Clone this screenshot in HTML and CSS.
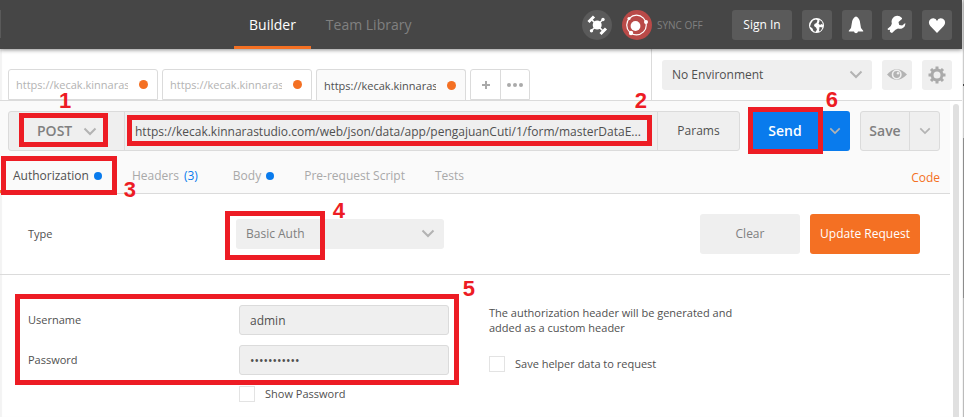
FILE: index.html
```html
<!DOCTYPE html>
<html lang="en">
<head>
<meta charset="utf-8">
<title>Postman</title>
<link rel="stylesheet" href="styles.css">
</head>
<body>
<svg class="defs" aria-hidden="true">
  <symbol id="chevron" viewBox="0 0 14 9"><path d="M1.500 1.500 7 7l5.500-5.500" fill="none" stroke="currentColor" stroke-width="2"/></symbol>
</svg>
<div class="window">
  <header class="topbar">
    <nav class="topnav">
      <a class="topnav-link active" href="#builder">Builder</a>
      <a class="topnav-link" href="#library">Team Library</a>
    </nav>
    <div class="tools">
      <button class="round" aria-label="Interceptor">
        <svg viewBox="0 0 30 30" width="30" height="30">
          <g stroke="#fff" stroke-width="1.600" fill="none"><path d="M9 9l12 12M21 9.500 9 21"/><path d="M6.500 12 12 6.500M18.500 24l5.500-5.500" stroke-width="3"/></g>
          <g fill="#fff"><circle cx="15.200" cy="15" r="4.500"/><circle cx="21" cy="9.500" r="1.700"/><circle cx="9.500" cy="20.700" r="1.700"/></g>
        </svg>
      </button>
      <button class="round sync" aria-label="Sync">
        <svg viewBox="0 0 30 30" width="30" height="30">
          <circle cx="14.500" cy="15" r="9.800" fill="none" stroke="#fff" stroke-width="1.200"/>
          <g fill="#fff"><circle cx="13.500" cy="16" r="4.900"/><circle cx="24" cy="12" r="2"/><circle cx="9" cy="23" r="2.200"/><circle cx="7" cy="8.500" r="1.600"/></g>
        </svg>
      </button>
      <span class="sync-label">SYNC OFF</span>
      <button class="tool signin">Sign In</button>
      <button class="tool" aria-label="Browse">
        <svg viewBox="0 0 30 30" width="30" height="30"><circle cx="14.500" cy="15.500" r="6.700" fill="#fff" stroke="#fff" stroke-width="1.600"/><path d="M9 13.500 11 10.500 14 9.500l1.500 1-1 2.500-2 1-.5 2 2 1.500 1 2-1.500 2.500-2-1-1-2.500-2.500-2zM17.500 9.800l2.500 2 1 3-1.500-.8-1.500 1-1.500-1.500.8-1.500zM17.500 17l3 .5-1.500 3-2 1z" fill="#5a5a5a"/></svg>
      </button>
      <button class="tool" aria-label="Notifications">
        <svg viewBox="0 0 30 30" width="30" height="30"><path d="M14 6.500q2.500.5 3.800 4.500l1.200 7 2.200 2.800v.7h-5.200q-.3 1.700-2 1.700T12 21.500H6.800v-.7L9 18l1.200-7Q11.500 7 14 6.500z" fill="#fff"/></svg>
      </button>
      <button class="tool" aria-label="Settings">
        <svg viewBox="0 0 30 30" width="30" height="30"><path d="M20 9 16.500 12l.7 3 3 .6 3.100-2.600q.3 4-3.300 5.500-2 .7-4-.1l-2.500 1.300-3.500 3.300-1.200-.5-1-1 .3-1.800-1.800.2-.9-1 3.400-2.900 1-2.300q-1.200-4.500 2.700-7.200 4-2 7.500 1.500z" fill="#fff"/></svg>
      </button>
      <button class="tool" aria-label="Favourites">
        <svg viewBox="0 0 30 30" width="30" height="30"><path d="M15 23 8.300 16Q6 13 7.500 10.200 9 8 11.500 8.200 14 8.500 15 11q1-2.500 3.500-2.800 2.500-.2 4 2Q24 13 21.700 16z" fill="#fff"/></svg>
      </button>
    </div>
  </header>

  <div class="strip">
    <div class="tabs">
      <button class="tab"><span class="tab-name">https://kecak.kinnarastudio.com</span><i class="dot unsaved"></i></button>
      <button class="tab"><span class="tab-name">https://kecak.kinnarastudio.com</span><i class="dot unsaved"></i></button>
      <button class="tab current"><span class="tab-name">https://kecak.kinnarastudio.com</span><i class="dot unsaved"></i></button>
      <div class="tab-actions">
        <button aria-label="New tab"><svg viewBox="0 0 10 10" width="10" height="10"><path d="M5 1v8M1 5h8" stroke="#aaa" stroke-width="2"/></svg></button>
        <button aria-label="More"><svg viewBox="0 0 18 6" width="18" height="6" fill="#aaa"><circle cx="3" cy="3" r="2"/><circle cx="9" cy="3" r="2"/><circle cx="15" cy="3" r="2"/></svg></button>
      </div>
    </div>
    <div class="environment">
      <div class="select env-select">
        <select aria-label="Environment"><option>No Environment</option></select>
        <svg class="chevron"><use href="#chevron"/></svg>
      </div>
      <button class="env-button" aria-label="Quick look">
        <svg viewBox="0 0 30 30" width="30" height="30"><path d="M5 14.500Q14.500 4 25 14.500 14.500 25 5 14.500z" fill="#b3b3b3"/><circle cx="14.700" cy="14.500" r="4.200" fill="none" stroke="#efefef" stroke-width="1.600"/><circle cx="16" cy="13.300" r="1.200" fill="#efefef"/></svg>
      </button>
      <button class="env-button" aria-label="Manage environments">
        <svg viewBox="0 0 30 30" width="30" height="30" fill="none" stroke="#aaa"><circle cx="15" cy="15" r="5" stroke-width="3"/><path d="M15 6.500v3M15 20.500v3M6.500 15h3M20.500 15h3M9 9l2.100 2.100M18.900 18.900 21 21M9 21l2.100-2.100M18.900 11.100 21 9" stroke-width="3"/></svg>
      </button>
    </div>
  </div>

  <div class="workspace">
    <main class="content">
      <section class="request">
        <div class="request-bar">
          <div class="request-line">
            <div class="method">
              <select aria-label="Method"><option>POST</option></select>
              <svg class="chevron"><use href="#chevron"/></svg>
              <span class="mark mark-method"><b>1</b></span>
            </div>
            <div class="url">
              <input type="text" aria-label="Request URL" value="https://kecak.kinnarastudio.com/web/json/data/app/pengajuanCuti/1/form/masterDataE...">
              <span class="mark mark-url"><b>2</b></span>
            </div>
            <button class="params">Params</button>
          </div>
          <div class="split send">
            <button class="split-main">Send</button>
            <button class="split-more" aria-label="Send options"><svg class="chevron"><use href="#chevron"/></svg></button>
            <span class="mark mark-send"><b>6</b></span>
          </div>
          <div class="split save">
            <button class="split-main">Save</button>
            <button class="split-more" aria-label="Save options"><svg class="chevron"><use href="#chevron"/></svg></button>
          </div>
        </div>
        <nav class="sections">
          <a class="section-link active" href="#auth">Authorization<i class="dot"></i><span class="mark mark-auth"><b>3</b></span></a>
          <a class="section-link" href="#headers">Headers<span class="count">(3)</span></a>
          <a class="section-link" href="#body">Body<i class="dot"></i></a>
          <a class="section-link" href="#script">Pre-request Script</a>
          <a class="section-link" href="#tests">Tests</a>
          <a class="code-link" href="#code">Code</a>
        </nav>
      </section>

      <section class="auth-type">
        <label class="type-label" for="type">Type</label>
        <div class="select type-select">
          <select id="type"><option>Basic Auth</option></select>
          <svg class="chevron"><use href="#chevron"/></svg>
          <span class="mark mark-type"><b>4</b></span>
        </div>
        <div class="actions">
          <button class="clear">Clear</button>
          <button class="update">Update Request</button>
        </div>
      </section>

      <form class="auth-form">
        <div class="fields">
          <div class="credentials">
            <label for="user">Username</label>
            <input id="user" type="text" value="admin">
            <label for="pass">Password</label>
            <input id="pass" type="password" value="adminkecak1">
            <span class="mark mark-credentials"><b>5</b></span>
          </div>
          <label class="check show-password"><input type="checkbox">Show Password</label>
        </div>
        <div class="helper">
          <p>The authorization header will be generated and added as a custom header</p>
          <label class="check"><input type="checkbox">Save helper data to request</label>
        </div>
      </form>
    </main>
    <div class="scroll"><div class="thumb"></div></div>
  </div>
</div>
<div class="window-edge"></div>
</body>
</html>
```

FILE: styles.css
```css
* { box-sizing: border-box; }

body {
  margin: 0;
  display: flex;
  min-height: 100vh;
  overflow: hidden;
  background: #fff;
  color: #505050;
  font: 12px/18px "Open Sans", "Noto Sans", sans-serif;
}

button, input, select {
  margin: 0;
  padding: 0;
  border: 0;
  border-radius: 0;
  background: none;
  color: inherit;
  font: inherit;
}

select { appearance: none; width: 100%; height: 100%; }
a { color: inherit; text-decoration: none; }
svg { display: block; }
.defs { position: absolute; width: 0; height: 0; }

.window {
  flex: 1;
  min-width: 0;
  display: flex;
  flex-direction: column;
  box-shadow: inset 2px 0 1px #f3f3f3;
}

.window-edge {
  width: 2px;
  border-left: 1px solid #f4f4f4;
  background: linear-gradient(#ccc 84px, #444 84px, #444 86px, #ccc 86px, #ccc 138px, #8c8c8c 138px, #8c8c8c 298px, #bbb 298px);
}

.dot {
  width: 8px;
  height: 8px;
  border-radius: 50%;
  background: #097bed;
}

.chevron { width: 14px; height: 9px; color: #b3b3b3; }

/* Top bar */
.topbar {
  position: relative;
  display: flex;
  justify-content: space-between;
  height: 49px;
  padding: 0 10px 0 234px;
  background: #464646;
  box-shadow: 0 1px 4px rgba(0, 0, 0, .45);
}

/* Edge of the button that is scrolled out on the left */
.topbar::before {
  content: "";
  position: absolute;
  left: 0;
  top: 10px;
  width: 1px;
  height: 28px;
  background: #5a5a5a;
}

.topnav { display: flex; }

.topnav-link {
  padding: 15px 15px 12px;
  color: #808080;
  font-size: 14px;
  line-height: 19px;
}

.topnav-link.active { border-bottom: 3px solid #f47023; color: #fff; }

.tools { display: flex; align-items: center; gap: 10px; }

.round, .tool {
  width: 30px;
  height: 30px;
  border-radius: 3px;
  background: #5a5a5a;
  color: #fff;
}

.round { border-radius: 50%; }
.round.sync { background: #b94a48; }
.sync-label { width: 65px; margin-left: -5px; color: #808080; font-size: 10px; }
.signin { width: 60px; }

/* Request tabs and environment */
.strip {
  display: flex;
  justify-content: space-between;
  height: 52px;
  border-bottom: 1px solid #dbdbdb;
}

.tabs { display: flex; align-items: flex-end; gap: 4px; padding-left: 8px; }

.tab {
  display: flex;
  align-items: center;
  justify-content: space-between;
  width: 150px;
  height: 31px;
  padding: 0 9px 0 7px;
  border: 1px solid #dbdbdb;
  border-radius: 3px 3px 0 0;
  background: #fff;
  color: #b3b3b3;
}

.tab.current { border-bottom: 0; background: #fafafa; color: #505050; }
.tab-name { width: 112px; overflow: hidden; white-space: nowrap; font-size: 11px; line-height: 15px; text-align: left; }
.tab .unsaved { width: 9px; height: 9px; background: #f47023; }

.tab-actions {
  display: flex;
  height: 31px;
  border: 1px solid #dbdbdb;
  border-radius: 3px 3px 0 0;
}

.tab-actions button { display: grid; place-items: center; width: 29px; }
.tab-actions button + button { border-left: 1px solid #dbdbdb; }

.environment {
  display: flex;
  align-items: center;
  gap: 10px;
  padding: 0 10px;
  border-left: 1px solid #dbdbdb;
}

.select { position: relative; height: 30px; border-radius: 3px; background: #efefef; }
.select select { padding-left: 10px; }
.select .chevron { position: absolute; right: 9px; top: 10px; pointer-events: none; }
.env-select { width: 210px; }
.env-button { width: 30px; height: 30px; border-radius: 3px; background: #efefef; }

/* Workspace */
.workspace { flex: 1; display: flex; }
.content { flex: 1; min-width: 0; }
.scroll { display: flex; width: 12px; padding: 3px 3px 0; }
.thumb { flex: 1; border-radius: 3px 3px 0 0; background: #e0e0e0; }

.request { border-bottom: 1px solid #dbdbdb; background: #fafafa; }
.request-bar { display: flex; gap: 10px; padding: 10px 10px 0 8px; }

.request-line {
  flex: 1;
  display: flex;
  height: 40px;
  border: 1px solid #dbdbdb;
  border-radius: 3px;
  background: #efefef;
}

.method { position: relative; width: 116px; border-right: 1px solid #dbdbdb; color: #808080; font-size: 14px; font-weight: 600; }
.method select { padding-left: 28px; }
.method .chevron { position: absolute; right: 27px; top: 15px; pointer-events: none; }
.url { position: relative; flex: 1; min-width: 0; }
.url input { width: 100%; height: 100%; padding: 0 10px; }
.params { width: 82px; border-left: 1px solid #dbdbdb; }

.split { position: relative; display: flex; height: 40px; border-radius: 3px; font-size: 14px; font-weight: 600; }
.split-more { display: grid; place-items: center; width: 30px; }
.split .chevron { width: 12px; height: 8px; }
.send { width: 100px; background: #097bed; color: #fff; }
.send .split-main { flex: 1; }
.save { width: 80px; border: 1px solid #dbdbdb; background: #efefef; color: #808080; }
.save .split-main { flex: 1; }
.save .split-more { border-left: 1px solid #dbdbdb; }

.sections { display: flex; color: #a9a9a9; height: 42px; }

.section-link {
  position: relative;
  display: flex;
  align-items: center;
  gap: 5px;
  padding: 10px 15px 0;
  border-bottom: 3px solid transparent;
}

.section-link.active { padding-left: 13px; border-color: #f47023; color: #505050; }
.count { padding-right: 5px; color: #097bed; }
.code-link { margin-left: auto; padding: 18px 10px 0 0; color: #f47023; }

/* Authorization */
.auth-type {
  display: flex;
  align-items: center;
  padding: 20px 30px 20px 28px;
  border-bottom: 1px solid #dbdbdb;
}

.type-label, .credentials label, .check { font-size: 11px; }
.type-label { width: 208px; }
.type-select { width: 208px; color: #808080; }
.actions { display: flex; gap: 10px; margin-left: auto; }
.actions button { width: 100px; height: 40px; border-radius: 3px; }
.actions .clear { background: #efefef; color: #808080; }
.actions .update { width: 110px; background: #f47023; color: #fff; }

.auth-form { display: flex; gap: 40px; padding: 30px 28px 0; }

.credentials {
  position: relative;
  display: grid;
  grid-template-columns: 211px 210px;
  align-items: center;
  row-gap: 10px;
}

.credentials input {
  height: 30px;
  padding: 0 10px;
  border: 1px solid #dbdbdb;
  border-radius: 3px;
  background: #efefef;
}

.check { display: flex; align-items: center; gap: 10px; }
.check input { appearance: none; width: 16px; height: 16px; border: 1px solid #e3e3e3; background: #fff; }
.show-password { margin: 10px 0 0 211px; }
.helper p { width: 250px; margin: 0 0 20px; font-size: 11px; line-height: 15px; }

/* Numbered callouts */
.mark { position: absolute; z-index: 1; border: 5px solid #ed1c24; pointer-events: none; }
.mark b { position: absolute; color: #ed1c24; font: bold 22px/16px "Liberation Sans", sans-serif; }
.mark-method { inset: 1px 16px 3px 10px; }
.mark-method b { left: 35px; top: -25px; }
.mark-url { inset: 3px 5px 4px 2px; }
.mark-url b { right: 0; top: -27px; }
.mark-send { inset: -4px 27px -3px -2px; }
.mark-send b { right: -20px; top: -20px; }
.mark-auth { inset: 5px 0 -5px 1px; }
.mark-auth b { right: -24px; top: 21px; }
.mark-type { inset: -8px 119px -11px -11px; }
.mark-type b { right: -25px; top: -13px; }
.mark-credentials { inset: -11px -10px -10px -13px; }
.mark-credentials b { right: -21px; top: -18px; }
```
